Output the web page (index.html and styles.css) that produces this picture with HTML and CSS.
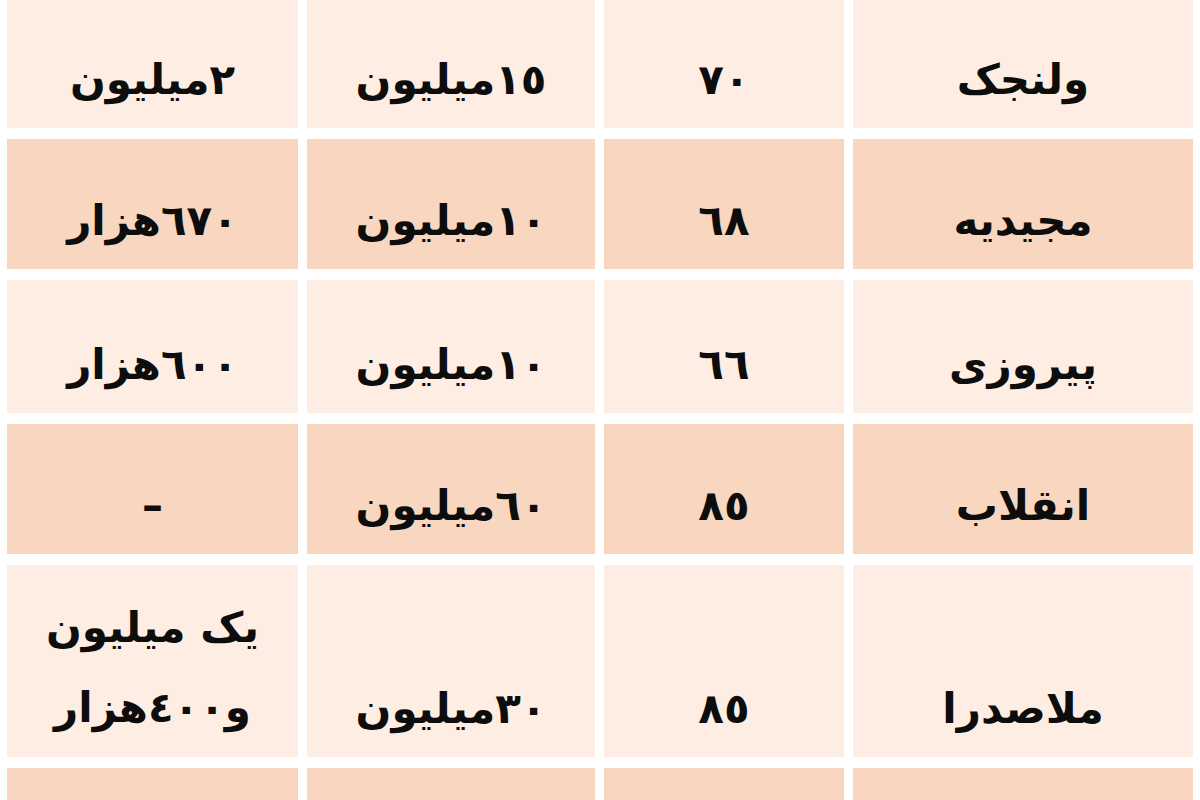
FILE: index.html
```html
<!DOCTYPE html>
<html lang="fa" dir="rtl">
<head>
<meta charset="utf-8">
<title>جدول قیمت</title>
<link rel="stylesheet" href="styles.css">
</head>
<body>
<div class="table">
  <div class="cell light">ولنجک</div>
  <div class="cell light">٧٠</div>
  <div class="cell light">١٥میلیون</div>
  <div class="cell light">٢میلیون</div>

  <div class="cell dark">مجیدیه</div>
  <div class="cell dark">٦٨</div>
  <div class="cell dark">١٠میلیون</div>
  <div class="cell dark">٦٧٠هزار</div>

  <div class="cell light">پیروزی</div>
  <div class="cell light">٦٦</div>
  <div class="cell light">١٠میلیون</div>
  <div class="cell light">٦٠٠هزار</div>

  <div class="cell dark">انقلاب</div>
  <div class="cell dark">٨٥</div>
  <div class="cell dark">٦٠میلیون</div>
  <div class="cell dark">–</div>

  <div class="cell light">ملاصدرا</div>
  <div class="cell light">٨٥</div>
  <div class="cell light">٣٠میلیون</div>
  <div class="cell light two">یک میلیون<br>و٤٠٠هزار</div>

  <div class="cell dark"></div>
  <div class="cell dark"></div>
  <div class="cell dark"></div>
  <div class="cell dark"></div>
</div>
</body>
</html>
```

FILE: styles.css
```css
html, body {
  margin: 0;
  padding: 0;
  background: #ffffff;
}

body {
  width: 1200px;
  height: 800px;
  overflow: hidden;
  font-family: "DejaVu Sans", sans-serif;
  color: #0d0d0d;
}

.table {
  direction: rtl;
  display: grid;
  grid-template-columns: 340px 240px 288px 291px;
  grid-template-rows: 134px 130px 133px 130px 192px 130px;
  column-gap: 9px;
  row-gap: 11px;
  padding: 0 7px;
  margin-top: -6px;
}

.cell {
  display: flex;
  align-items: flex-end;
  justify-content: center;
  text-align: center;
  font-size: 42px;
  font-weight: bold;
  line-height: 64px;
  padding-bottom: 16px;
  box-sizing: border-box;
}

.light {
  background: #fdede3;
}

.dark {
  background: #f9d6bf;
}

.two {
  line-height: 80px;
  padding-bottom: 9px;
}
```
